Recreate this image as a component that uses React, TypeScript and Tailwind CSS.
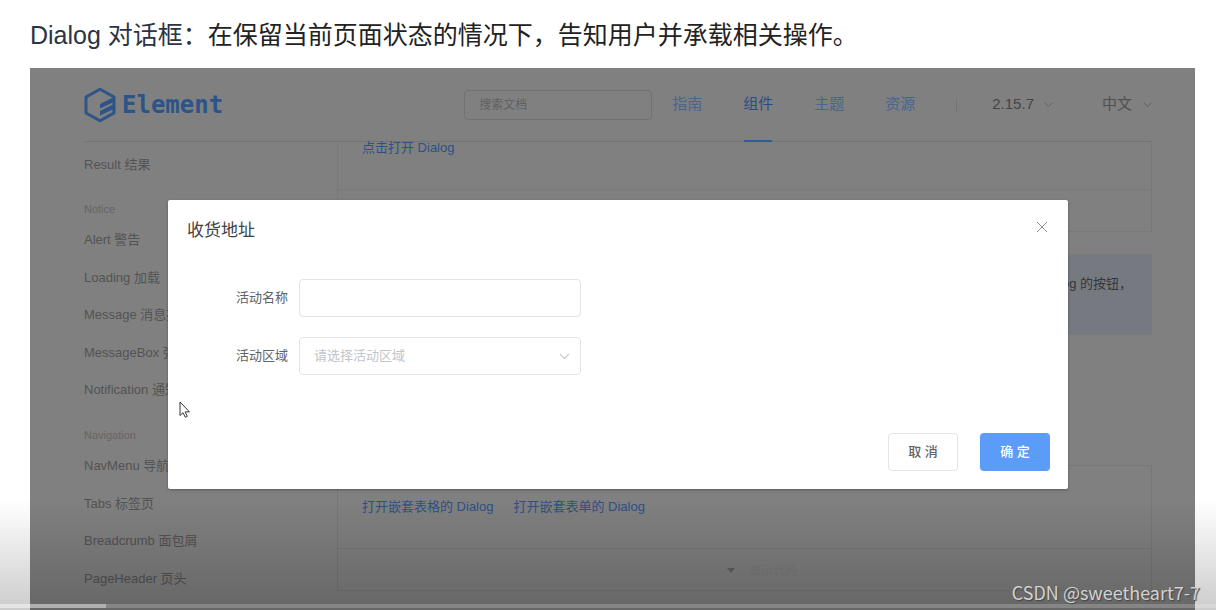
type NavGroup = {
  title: string;
  height: string;
  items: string[];
};

const groups: NavGroup[] = [
  {
    title: "Notice",
    height: "h-[188px]",
    items: [
      "Alert 警告",
      "Loading 加载",
      "Message 消息提示",
      "MessageBox 弹框",
      "Notification 通知",
    ],
  },
  {
    title: "Navigation",
    height: "h-[150px]",
    items: [
      "NavMenu 导航菜单",
      "Tabs 标签页",
      "Breadcrumb 面包屑",
      "PageHeader 页头",
    ],
  },
];

function Chevron({ className }: { className: string }) {
  return (
    <svg viewBox="0 0 10 6" fill="none" stroke="currentColor" className={className}>
      <path d="M1 1 L5 5 L9 1" />
    </svg>
  );
}

function Logo() {
  return (
    <a href="#home" className="flex items-center gap-1.5 text-[#2d5488]">
      <svg viewBox="0 0 32 36" className="h-9 w-8">
        <path
          d="M16 2.200 L30 10 V26 L16 33.800 L2 26 V10 Z"
          fill="none"
          stroke="currentColor"
          strokeWidth="3"
          strokeLinejoin="round"
        />
        <path
          d="M31 9.500v5L16 21.500v-4.500zM31 16.500v5L16 28.500V24z"
          fill="currentColor"
        />
      </svg>
      <span className="font-['DejaVu_Sans_Mono',monospace] text-[24px] leading-9 font-bold">
        Element
      </span>
    </a>
  );
}

function Header() {
  return (
    <header className="flex h-[74px] items-center border-b border-[#747474]">
      <Logo />
      <input
        type="text"
        aria-label="搜索文档"
        placeholder="搜索文档"
        className="ml-auto h-[30px] w-[188px] rounded-sm border border-[#717171] bg-transparent px-3.5 text-xs placeholder:text-[#5f6062]"
      />
      <nav className="ml-5 flex h-full items-center gap-[41px] text-[15px] text-[#48658f]">
        <a href="#guide">指南</a>
        <a
          href="#component"
          className="relative flex h-full items-center text-[#2a4d80]"
        >
          组件
          <span className="absolute inset-x-px -bottom-px h-0.5 bg-[#2f5c9c]" />
        </a>
        <a href="#theme">主题</a>
        <a href="#resource">资源</a>
      </nav>
      <span className="ml-[41px] h-3.5 w-px bg-[#747474]" />
      <button className="ml-[35px] flex items-center gap-2.5 text-[15px] text-[#454545]">
        2.15.7
        <Chevron className="w-[9px] text-[#5c5c5c]" />
      </button>
      <button className="ml-[49px] flex items-center gap-[11px] text-[15px] text-[#505050]">
        中文
        <Chevron className="w-[9px] text-[#5c5c5c]" />
      </button>
    </header>
  );
}

function Sidebar() {
  return (
    <aside className="w-[253px] shrink-0 pt-1 text-[13px] text-[#535353]">
      <a href="#result" className="flex h-[37px] items-center">
        Result 结果
      </a>
      {groups.map((group) => (
        <section key={group.title}>
          <h2 className="mt-3.5 h-6 text-[11px] leading-6 text-[#656565]">
            {group.title}
          </h2>
          <ul className={`flex flex-col ${group.height}`}>
            {group.items.map((item) => (
              <li key={item} className="flex flex-1 items-center">
                <a href="#component">{item}</a>
              </li>
            ))}
          </ul>
        </section>
      ))}
    </aside>
  );
}

function Content() {
  return (
    <main className="min-w-0 flex-1 text-[13px] text-[#2c5087]">
      <div className="h-[90px] border border-t-0 border-[#797979]">
        <div className="h-12 border-b border-[#797979] px-6">
          <a href="#dialog" className="block leading-3">
            点击打开 Dialog
          </a>
        </div>
      </div>
      <p className="mt-[22px] h-[81px] bg-[#767a80] px-5 pt-5 text-right leading-5 text-[#33363b]">
        打开 Dialog 的按钮，
      </p>
      <div className="mt-[130px] h-[126px] border border-[#777777]">
        <div className="flex h-[83px] items-center gap-5 border-b border-[#777777] px-6">
          <a href="#table">打开嵌套表格的 Dialog</a>
          <a href="#form">打开嵌套表单的 Dialog</a>
        </div>
        <button className="flex h-[41px] w-full items-center justify-center gap-3.5 pt-0.5 pl-9 text-xs text-[#797979]">
          <svg viewBox="0 0 8 5" className="w-2 fill-[#5f5f5f]">
            <path d="M0 0h8L4 5z" />
          </svg>
          显示代码
        </button>
      </div>
    </main>
  );
}

function Dialog() {
  return (
    <div
      role="dialog"
      aria-labelledby="dialog-title"
      className="w-full rounded-xs bg-white pt-[17px] pr-[18px] pb-[18px] pl-[19px] text-[13px] text-[#606266] shadow-[0_1px_3px_rgba(0,0,0,0.3)]"
    >
      <div className="flex h-[62px] items-start justify-between">
        <h2 id="dialog-title" className="text-[17px] leading-7 text-[#414244]">
          收货地址
        </h2>
        <button aria-label="关闭" className="p-[2px] pt-1 text-[#909399]">
          <svg viewBox="0 0 12 12" stroke="currentColor" className="size-3">
            <path d="M1 1 L11 11 M11 1 L1 11" />
          </svg>
        </button>
      </div>
      <form className="flex flex-col gap-5">
        <div className="flex items-center">
          <label htmlFor="name" className="w-[112px] pr-[11px] text-right">
            活动名称
          </label>
          <input
            id="name"
            type="text"
            className="h-[38px] w-[282px] rounded border border-[#e2e4e8] px-3.5"
          />
        </div>
        <div className="flex items-center">
          <label htmlFor="region" className="w-[112px] pr-[11px] text-right">
            活动区域
          </label>
          <div className="relative">
            <select
              id="region"
              className="h-[38px] w-[282px] appearance-none rounded border border-[#e2e4e8] bg-white px-3.5 text-[#c0c4cc]"
            >
              <option>请选择活动区域</option>
            </select>
            <Chevron className="pointer-events-none absolute top-4 right-[11px] w-[11px] text-[#c0c4cc]" />
          </div>
        </div>
      </form>
      <div className="mt-[58px] flex justify-end gap-[22px] font-medium">
        <button className="h-[38px] w-[70px] rounded border border-[#e2e4e8]">
          取 消
        </button>
        <button className="h-[38px] w-[70px] rounded bg-[#5b9cf8] text-white">
          确 定
        </button>
      </div>
    </div>
  );
}

export default function App() {
  return (
    <div className="relative flex min-h-screen flex-col overflow-hidden bg-white pr-[21px] pl-[30px] font-['Liberation_Sans','Noto_Sans_CJK_SC',sans-serif]">
      <h1 className="h-[68px] text-[25px] leading-[70px] text-[#222222]">
        <span className="text-[#2b3445]">Dialog 对话框：</span>
        在保留当前页面状态的情况下，告知用户并承载相关操作。
      </h1>

      <div className="relative flex-1 bg-[#808080] pr-[43px] pl-[54px]">
        <Header />
        <div className="flex">
          <Sidebar />
          <Content />
        </div>
        <div className="absolute inset-0 flex items-start pt-[132px] pr-[127px] pl-[138px]">
          <Dialog />
        </div>
      </div>

      {/* mouse pointer */}
      <svg
        viewBox="0 0 12 17"
        className="absolute top-[401px] left-[179px] h-[17px] w-3 fill-white stroke-[#333333]"
      >
        <path d="M1 1v13.5l3-2.8 2.3 4.6 2-1-2.2-4.4H10.500z" />
      </svg>

      {/* player controls shade and progress */}
      <div className="pointer-events-none absolute inset-x-0 bottom-0 flex h-[110px] flex-col justify-end bg-linear-to-b from-transparent to-black/20 pb-0.5">
        <div className="h-1 bg-white/20">
          <div className="h-full w-[106px] bg-white/35" />
        </div>
      </div>
      <p className="absolute right-4 bottom-1 font-['Noto_Sans_CJK_SC',sans-serif] text-[18px] leading-7 text-[#d2d2d2] [text-shadow:1px_1px_1px_#444444]">
        CSDN @sweetheart7-7
      </p>
    </div>
  );
}
